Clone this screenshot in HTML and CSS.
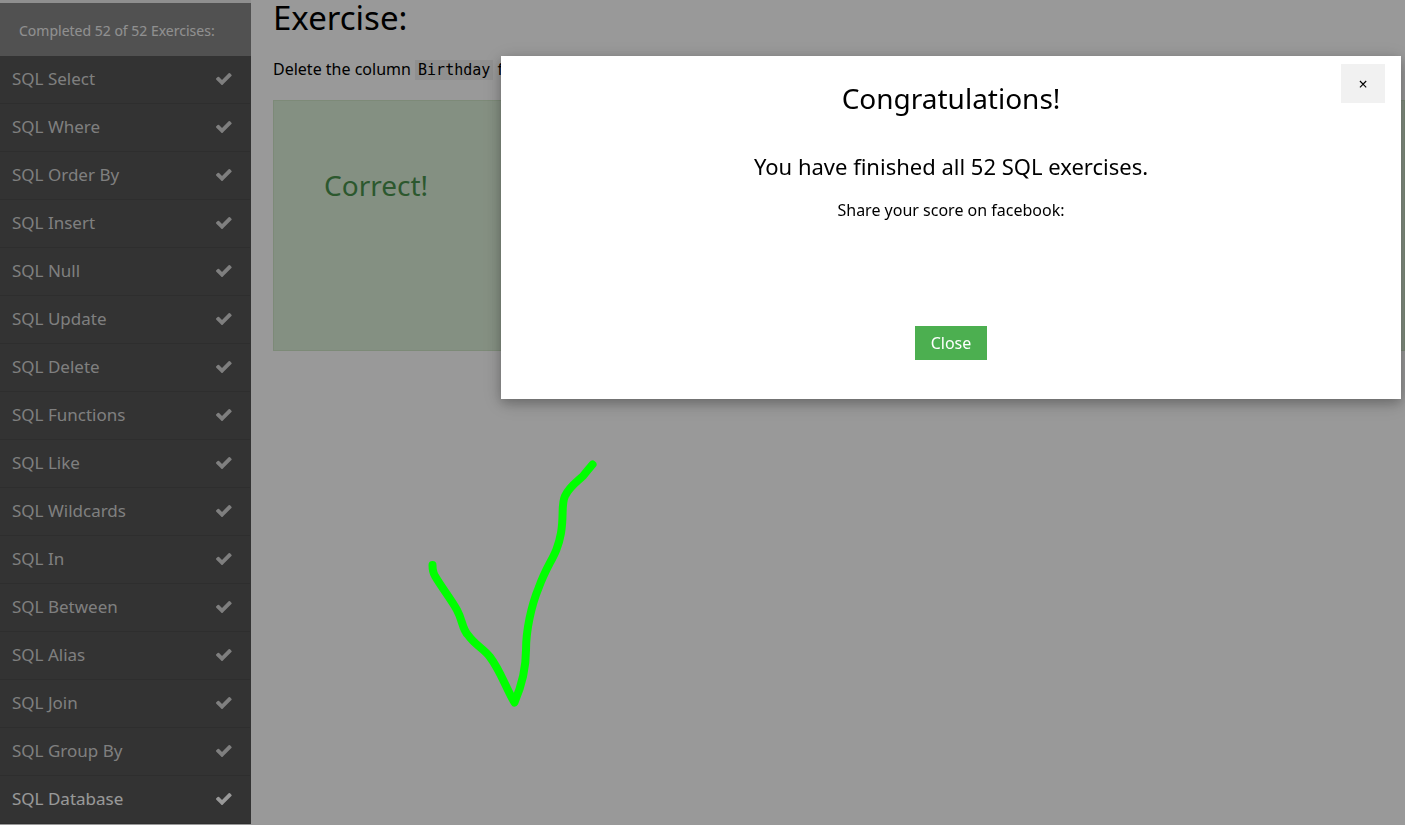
FILE: index.html
```
<!DOCTYPE html>
<html lang="en">
<head>
<meta charset="utf-8">
<title>SQL Exercises</title>
<meta name="viewport" content="width=device-width, initial-scale=1">
<link rel="stylesheet" href="styles.css">
</head>
<body>
<svg class="sprite" aria-hidden="true">
  <symbol id="check" viewBox="0 0 1550 1188"><path d="M1523 300q0 40-28 68l-724 724-136 136q-28 28-68 28t-68-28l-136-136-362-362q-28-28-28-68t28-68l136-136q28-28 68-28t68 28l294 295 656-657q28-28 68-28t68 28l136 136q28 28 28 68z" transform="translate(13 -68)"/></symbol>
</svg>
<div class="page">
  <nav class="sidebar" aria-label="Exercises">
    <div class="progress">Completed 52 of 52 Exercises:</div>
    <a class="item" href="#">SQL Select<svg class="tick"><use href="#check"/></svg></a>
    <a class="item" href="#">SQL Where<svg class="tick"><use href="#check"/></svg></a>
    <a class="item" href="#">SQL Order By<svg class="tick"><use href="#check"/></svg></a>
    <a class="item" href="#">SQL Insert<svg class="tick"><use href="#check"/></svg></a>
    <a class="item" href="#">SQL Null<svg class="tick"><use href="#check"/></svg></a>
    <a class="item" href="#">SQL Update<svg class="tick"><use href="#check"/></svg></a>
    <a class="item" href="#">SQL Delete<svg class="tick"><use href="#check"/></svg></a>
    <a class="item" href="#">SQL Functions<svg class="tick"><use href="#check"/></svg></a>
    <a class="item" href="#">SQL Like<svg class="tick"><use href="#check"/></svg></a>
    <a class="item" href="#">SQL Wildcards<svg class="tick"><use href="#check"/></svg></a>
    <a class="item" href="#">SQL In<svg class="tick"><use href="#check"/></svg></a>
    <a class="item" href="#">SQL Between<svg class="tick"><use href="#check"/></svg></a>
    <a class="item" href="#">SQL Alias<svg class="tick"><use href="#check"/></svg></a>
    <a class="item" href="#">SQL Join<svg class="tick"><use href="#check"/></svg></a>
    <a class="item" href="#">SQL Group By<svg class="tick"><use href="#check"/></svg></a>
    <a class="item current" href="#">SQL Database<svg class="tick"><use href="#check"/></svg></a>
  </nav>
  <main class="main">
    <h1 class="title">Exercise:</h1>
    <p class="task">Delete the column <code class="code">Birthday</code> f</p>
    <section class="result"><h2 class="result-title">Correct!</h2></section>
  </main>
</div>
<div class="overlay">
  <div class="modal" role="dialog" aria-modal="true" aria-labelledby="modal-title">
    <button class="dismiss" type="button" aria-label="Dismiss">×</button>
    <h2 class="modal-title" id="modal-title">Congratulations!</h2>
    <h3 class="modal-subtitle">You have finished all 52 SQL exercises.</h3>
    <p class="share">Share your score on facebook:</p>
    <button class="close" type="button">Close</button>
  </div>
</div>
<svg class="drawing" viewBox="0 0 210 270" aria-hidden="true">
  <path d="M22.500 115Q22.500 122 25 126C32 138 41 149 47 160C53 171 52 179 58 185C65 195 74 199 80 207C90 220 96 238 104.500 252.500C112 235 116 219 116 200C116 181 121 156 129 137C138 112 147 106 151 83C154 66 151 54 155 46C160 36 167 32 173 26Q177 21 182.500 14.500"/>
</svg>
</body>
</html>
```
FILE: styles.css
```
* { box-sizing: border-box; }

body {
  margin: 0;
  background: #fff;
  color: #000;
  font-family: "Noto Sans", sans-serif;
  font-size: 16px;
  line-height: 24px;
}

h1, h2, h3, p { margin: 0; }

h1, h2, h3 { font-weight: 400; }

.sprite {
  position: absolute;
  width: 0;
  height: 0;
}

.page {
  display: flex;
  align-items: flex-start;
  min-height: 100vh;
}

/* Sidebar */
.sidebar {
  flex: 0 0 251px;
  border-top: 3px solid #eee;
  background: #555;
}

.progress {
  padding: 16px 19px 13px;
  background: #888;
  color: #f1f1f1;
  font-size: 14px;
}

.item {
  display: flex;
  align-items: center;
  justify-content: space-between;
  height: 48px;
  margin-right: 1px;
  padding: 0 18px 1px 12px;
  border-bottom: 1px solid #4d4d4d;
  color: #d4d4d4;
  font-size: 17px;
  text-decoration: none;
}

.current { color: #fff; }

.tick {
  width: 16px;
  height: 12px;
  fill: currentColor;
}

/* Exercise */
.main {
  flex: 1;
  min-width: 0;
  padding-left: 22px;
}

.title {
  padding-bottom: 22px;
  font-size: 33px;
  line-height: 35px;
}

.task { padding-bottom: 18px; }

.code {
  padding: 1px 3px;
  background: #f1f1f1;
  font-family: Consolas, "DejaVu Sans Mono", monospace;
  font-size: 15px;
}

.result {
  min-height: 251px;
  padding: 64px 50px;
  border: 1px solid #d0e6c8;
  background: #ddf0d9;
  color: #4a934e;
}

.result-title {
  font-size: 28px;
  line-height: 40px;
}

/* Dialog */
.overlay {
  position: fixed;
  inset: 0;
  display: flex;
  justify-content: flex-end;
  align-items: flex-start;
  padding: 56px 4px 0;
  background: rgba(0, 0, 0, 0.4);
}

.modal {
  position: relative;
  display: flex;
  flex-direction: column;
  align-items: center;
  width: 100%;
  max-width: 900px;
  padding: 22px 16px 39px;
  background: #fff;
  box-shadow: 0 4px 10px rgba(0, 0, 0, 0.2), 0 4px 20px rgba(0, 0, 0, 0.19);
}

.dismiss, .close {
  padding: 5px 16px;
  border: 0;
  font: inherit;
  cursor: pointer;
}

.dismiss {
  position: absolute;
  top: 8px;
  right: 16px;
  min-width: 44px;
  padding: 8px 16px 7px;
  background: #f1f1f1;
  color: #000;
}

.modal-title {
  padding-bottom: 30px;
  font-size: 28px;
  line-height: 40px;
}

.modal-subtitle {
  padding-bottom: 14px;
  font-size: 22px;
  line-height: 36px;
}

.share { padding-bottom: 104px; }

.close {
  background: #4caf50;
  color: #fff;
}

/* Hand-drawn mark */
.drawing {
  position: absolute;
  top: 450px;
  left: 410px;
  width: 210px;
  height: 270px;
  fill: none;
  stroke: #0f0;
  stroke-width: 8;
  stroke-linecap: round;
  stroke-linejoin: round;
}
```
